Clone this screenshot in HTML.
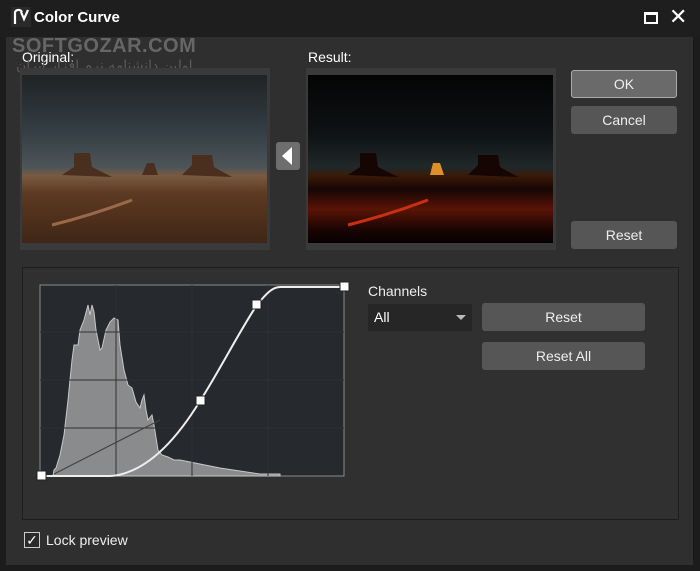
<!DOCTYPE html>
<html><head><meta charset="utf-8"><style>
*{margin:0;padding:0;box-sizing:border-box}
body{width:700px;height:571px;background:#1c1c1c;font-family:"Liberation Sans",sans-serif;color:#e8e8e8;position:relative;overflow:hidden;font-size:14px}
.a{position:absolute}
.btn{position:absolute;background:#565656;border-radius:3px;text-align:center;color:#eee;font-size:14px}
</style></head><body>
<div class="a" style="left:0;top:0;width:700px;height:37px;background:#1e1e1e"></div>
<svg class="a" style="left:11px;top:7px" width="20" height="20" viewBox="0 0 20 20"><rect width="20" height="20" fill="#2a2a2a"/><path d="M4 17V5a4 4 0 0 1 7 0M10 5l3 7 4-9" stroke="#fff" stroke-width="2.2" fill="none"/></svg>
<div class="a" style="left:34px;top:9px;font-weight:bold;font-size:15px;color:#fff">Color Curve</div>
<div class="a" style="left:644px;top:12px;width:14px;height:12px;border:2px solid #fff;border-top-width:3px"></div>
<div class="a" style="left:669px;top:4px;font-size:22px;color:#fff">✕</div>
<div class="a" style="left:6px;top:37px;width:687px;height:528px;background:#2f2f2f"></div>
<div class="a" style="left:12px;top:35px;font-size:20px;font-weight:bold;color:#666;letter-spacing:0.5px">SOFTGOZAR.COM</div>
<div class="a" style="left:22px;top:49px;font-size:14px;color:#fff">Original:</div>
<div class="a" style="left:16px;top:58px;font-size:14px;color:#5a5a5a;font-family:'DejaVu Sans',sans-serif">اولین دانشنامه نرم افزار ایران</div>
<div class="a" style="left:308px;top:49px;font-size:14px;color:#fff">Result:</div>
<div class="a" style="left:20px;top:68px;width:250px;height:182px;background:#3a3a3a"></div>
<div class="a" style="left:306px;top:68px;width:250px;height:182px;background:#3a3a3a"></div>
<svg class="a" style="left:22px;top:75px" width="245" height="168" viewBox="0 0 245 168">
<defs><linearGradient id="g1" x1="0" y1="0" x2="0" y2="1"><stop offset="0" stop-color="#1f2325"/><stop offset="0.35" stop-color="#353f45"/><stop offset="0.55" stop-color="#4d5558"/><stop offset="0.6" stop-color="#7a5a40"/><stop offset="0.7" stop-color="#5e3a22"/><stop offset="1" stop-color="#3e2616"/></linearGradient></defs>
<rect width="245" height="168" fill="url(#g1)"/>
<path d="M40 100L52 92 52 78 68 78 70 92 90 102Z M120 100L125 88 132 88 136 100Z M160 100L170 90 170 80 190 80 192 92 210 102Z" fill="#4a2e1e"/>
<path d="M30 150Q70 140 110 125" stroke="#9a6a48" stroke-width="3" fill="none"/>
</svg>
<svg class="a" style="left:308px;top:75px" width="245" height="168" viewBox="0 0 245 168">
<defs><linearGradient id="g2" x1="0" y1="0" x2="0" y2="1"><stop offset="0" stop-color="#040404"/><stop offset="0.35" stop-color="#0e1214"/><stop offset="0.55" stop-color="#20282a"/><stop offset="0.6" stop-color="#3a1a08"/><stop offset="0.68" stop-color="#160604"/><stop offset="0.8" stop-color="#5a1406"/><stop offset="0.92" stop-color="#1a0402"/><stop offset="1" stop-color="#060202"/></linearGradient></defs>
<rect width="245" height="168" fill="url(#g2)"/>
<path d="M40 100L52 92 52 78 68 78 70 92 90 102Z M160 100L170 90 170 80 190 80 192 92 210 102Z" fill="#150604"/>
<path d="M122 100L125 88 132 88 136 100Z" fill="#e0902a"/>
<path d="M40 150Q80 140 120 125" stroke="#c83010" stroke-width="3" fill="none"/>
</svg>
<div class="a" style="left:276px;top:142px;width:24px;height:28px;background:#6e6e6e;border-radius:3px"></div>
<div class="a" style="left:282px;top:147px;width:0;height:0;border-top:9px solid transparent;border-bottom:9px solid transparent;border-right:10px solid #fff"></div>
<div class="btn" style="left:571px;top:70px;width:106px;height:28px;line-height:26px;background:#6a6a6a;border:1px solid #aaa">OK</div>
<div class="btn" style="left:571px;top:106px;width:106px;height:28px;line-height:28px">Cancel</div>
<div class="btn" style="left:571px;top:221px;width:106px;height:28px;line-height:28px">Reset</div>
<div class="a" style="left:22px;top:267px;width:657px;height:253px;border:1px solid #1e1e1e;background:#303030"></div>
<svg class="a" style="left:34px;top:280px" width="316" height="202" viewBox="34 280 316 202">
<rect x="40" y="285" width="304" height="191" fill="#26292d" stroke="#8a8a8a" stroke-width="1"/>
<path d="M53 476L54 470 56 468 60 455 64 435 68 400 72 360 74 345 78 345 80 330 84 320 88 305 90 315 92 305 94 312 96 330 100 350 102 348 106 330 110 322 114 318 118 320 120 345 124 370 128 385 132 388 136 402 140 408 142 400 144 395 146 410 148 420 152 415 154 425 158 450 162 455 168 457 174 460 180 460 190 462 200 464 210 466 220 468 240 471 260 474 280 474 280 476Z" fill="#8a8b8d" stroke="#c8c8c8" stroke-width="1"/>
<path d="M116 285V476M192 285V476M268 285V476M40 332H344M40 380H344M40 428H344" stroke="#2e3034" stroke-width="1"/>
<path d="M54 474L160 420" stroke="#444" stroke-width="1.2"/>
<path d="M41 476L110 476C140 474 170 450 200 401C220 370 240 330 257 305C265 295 272 287 280 287L344 287" stroke="#eee" stroke-width="2" fill="none"/>
<rect x="37" y="471" width="9" height="9" fill="#fff" stroke="#222"/>
<rect x="196" y="396" width="9" height="9" fill="#fff" stroke="#222"/>
<rect x="252" y="300" width="9" height="9" fill="#fff" stroke="#222"/>
<rect x="340" y="282" width="9" height="9" fill="#fff" stroke="#222"/>
</svg>
<div class="a" style="left:368px;top:283px;color:#eee">Channels</div>
<div class="a" style="left:368px;top:304px;width:104px;height:27px;background:#262626;padding:5px 6px;color:#fff">All</div>
<div class="a" style="left:456px;top:315px;width:0;height:0;border-left:5px solid transparent;border-right:5px solid transparent;border-top:5px solid #bbb"></div>
<div class="btn" style="left:482px;top:303px;width:163px;height:28px;line-height:28px">Reset</div>
<div class="btn" style="left:482px;top:342px;width:163px;height:28px;line-height:28px">Reset All</div>
<div class="a" style="left:24px;top:532px;width:16px;height:16px;border:1px solid #ccc;background:#2a2a2a;color:#fff;font-size:14px;line-height:14px;text-align:center">✓</div>
<div class="a" style="left:46px;top:532px;color:#eee">Lock preview</div>
</body></html>
